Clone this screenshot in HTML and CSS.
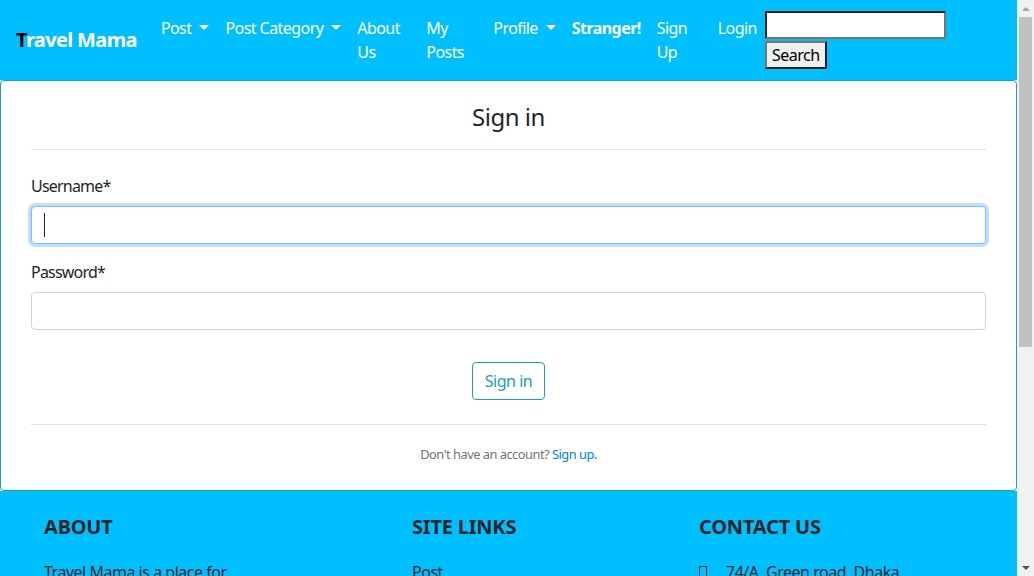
FILE: index.html
```html
<!DOCTYPE html>
<html lang="en">
<head>
<meta charset="utf-8">
<title>Travel Mama - Sign in</title>
<link rel="stylesheet" href="styles.css">
</head>
<body>
<div class="window">
  <div class="page">
    <nav class="navbar">
      <a class="brand" href="#"><span class="brand-first">T</span>ravel Mama</a>
      <ul class="nav">
        <li class="nav-item"><a class="nav-link dropdown" href="#">Post</a></li>
        <li class="nav-item"><a class="nav-link dropdown" href="#">Post Category</a></li>
        <li class="nav-item nav-about"><a class="nav-link" href="#">About Us</a></li>
        <li class="nav-item nav-myposts"><a class="nav-link" href="#">My Posts</a></li>
        <li class="nav-item"><a class="nav-link dropdown" href="#">Profile</a></li>
        <li class="nav-item"><a class="nav-link strong" href="#">Stranger!</a></li>
        <li class="nav-item nav-signup"><a class="nav-link" href="#">Sign Up</a></li>
        <li class="nav-item"><a class="nav-link" href="#">Login</a></li>
      </ul>
      <form class="search">
        <input class="search-input" type="text" aria-label="Search">
        <button class="search-btn" type="button">Search</button>
      </form>
    </nav>

    <main class="card">
      <div class="card-body">
        <h3 class="card-title">Sign in</h3>
        <hr class="rule rule-top">
        <form class="signin">
          <div class="form-group">
            <label class="label">Username*</label>
            <div class="input input-focus"><span class="caret"></span></div>
          </div>
          <div class="form-group">
            <label class="label">Password*</label>
            <div class="input"></div>
          </div>
          <div class="actions">
            <button class="btn-outline" type="button">Sign in</button>
          </div>
        </form>
        <hr class="rule rule-bottom">
        <p class="alt">Don't have an account? <a href="#" class="alt-link">Sign up.</a></p>
      </div>
    </main>

    <footer class="footer">
      <div class="footer-grid">
        <div class="footer-col">
          <h4 class="footer-title">ABOUT</h4>
          <p class="footer-text">Travel Mama is a place for</p>
        </div>
        <div class="footer-col">
          <h4 class="footer-title">SITE LINKS</h4>
          <p class="footer-text">Post</p>
        </div>
        <div class="footer-col">
          <h4 class="footer-title">CONTACT US</h4>
          <p class="footer-text"><span class="tofu"></span>74/A, Green road, Dhaka</p>
        </div>
      </div>
    </footer>
  </div>
  <div class="scrollbar">
    <div class="arrow arrow-up"></div>
    <div class="track"><div class="thumb"></div></div>
    <div class="arrow arrow-down"></div>
  </div>
</div>
</body>
</html>
```
FILE: styles.css
```css
* { box-sizing: border-box; }
html, body { margin: 0; padding: 0; height: 576px; overflow: hidden; }
body {
  font-family: "Noto Sans", "Open Sans", sans-serif;
  font-size: 16px;
  line-height: 24px;
  letter-spacing: -0.03em;
  color: #212529;
  background: #fff;
}
.window { display: flex; height: 576px; }
.page { flex: 1; min-width: 0; height: 576px; overflow: hidden; }

/* navbar */
.navbar {
  background: #00bfff;
  display: flex;
  align-items: center;
  padding: 8px 16px;
  height: 80px;
}
.brand {
  font-size: 20px;
  font-weight: 700;
  line-height: 30px;
  letter-spacing: -0.032em;
  color: #fff;
  text-decoration: none;
  margin-right: 16px;
  white-space: nowrap;
}
.brand-first { color: #000; }
.nav {
  list-style: none;
  margin: 0;
  padding: 0;
  display: flex;
  align-items: flex-start;
  align-self: flex-start;
  letter-spacing: -0.035em;
}
.nav-link {
  display: block;
  padding: 8px;
  color: #fff;
  text-decoration: none;
  white-space: nowrap;
}
.nav-about .nav-link, .nav-myposts .nav-link, .nav-signup .nav-link { white-space: normal; }
.nav-about { width: 69px; }
.nav-myposts { width: 67px; }
.nav-signup { width: 61px; }
.strong { font-weight: 700; }
.dropdown::after {
  content: "";
  display: inline-block;
  margin-left: 8px;
  vertical-align: 4px;
  border-top: 5px solid #fff;
  border-left: 5px solid transparent;
  border-right: 5px solid transparent;
}
.search { display: flex; flex-direction: column; align-items: flex-start; gap: 2px; }
.search-input {
  width: 181px;
  height: 28px;
  border-style: solid;
  border-width: 2px;
  border-color: #1e1e1e #767676 #767676 #1e1e1e;
  background: #fff;
  margin: 0;
  padding: 1px 2px;
}
.search-btn {
  width: 62px;
  height: 28px;
  margin: 0;
  padding: 0;
  background: #efefef;
  border-style: solid;
  border-width: 2px;
  border-color: #767676 #1e1e1e #1e1e1e #767676;
  font-family: "Noto Sans", "Open Sans", sans-serif;
  font-size: 16px;
  letter-spacing: -0.03em;
  color: #000;
}

/* card */
.card {
  display: block;
  border: 1px solid #17a2b8;
  border-radius: 4px;
  background: #fff;
}
.card-body { padding: 21px 30px 26px; }
.card-title {
  margin: 0;
  text-align: center;
  font-size: 24px;
  font-weight: 400;
  line-height: 29px;
}
.rule { border: 0; border-top: 1px solid #dfe1e3; margin: 0; }
.rule-top { margin: 18px 0 24px; }
.rule-bottom { margin: 24px 0 20px; }
.form-group { margin-bottom: 16px; }
.label { display: block; margin-bottom: 8px; letter-spacing: -0.05em; }
.input {
  height: 38px;
  border: 1px solid #ced4da;
  border-radius: 4px;
  background: #fff;
  padding: 6px 12px;
}
.input-focus {
  border-color: #80bdff;
  box-shadow: 0 0 0 3px rgba(0, 123, 255, 0.25);
}
.caret {
  display: block;
  width: 1px;
  height: 24px;
  background: #212529;
}
.actions { display: flex; justify-content: center; padding-top: 16px; }
.btn-outline {
  height: 38px;
  padding: 6px 12px;
  border: 1px solid #17a2b8;
  border-radius: 4px;
  background: transparent;
  color: #17a2b8;
  font-family: "Noto Sans", "Open Sans", sans-serif;
  font-size: 16px;
  line-height: 24px;
  letter-spacing: -0.03em;
}
.alt {
  margin: 0;
  text-align: center;
  font-size: 12.8px;
  line-height: 19px;
  color: #6c757d;
}
.alt-link { color: #007bff; text-decoration: none; }

/* footer */
.footer { background: #00bfff; padding: 24px 0 20px; }
.footer-grid {
  display: grid;
  grid-template-columns: 368px 287px 1fr;
  padding-left: 44px;
}
.footer-title {
  margin: 0 0 21px;
  font-size: 20px;
  font-weight: 700;
  line-height: 24px;
  letter-spacing: -0.01em;
  color: #212529;
}
.footer-text { margin: 0; color: #212529; }
.tofu {
  display: inline-block;
  width: 8px;
  height: 13px;
  border: 1px solid #212529;
  margin-right: 19px;
  vertical-align: -1px;
}

/* scrollbar */
.scrollbar {
  width: 17px;
  height: 576px;
  background: #f1f1f1;
  display: flex;
  flex-direction: column;
  align-items: center;
}
.arrow { height: 17px; width: 17px; display: flex; align-items: center; justify-content: center; }
.arrow-up::before {
  content: "";
  border-bottom: 4px solid #a3a3a3;
  border-left: 4px solid transparent;
  border-right: 4px solid transparent;
}
.arrow-down::before {
  content: "";
  border-top: 4px solid #505050;
  border-left: 4px solid transparent;
  border-right: 4px solid transparent;
}
.track { flex: 1; width: 100%; padding: 0 2px; }
.thumb { height: 330px; background: #c1c1c1; }
```
